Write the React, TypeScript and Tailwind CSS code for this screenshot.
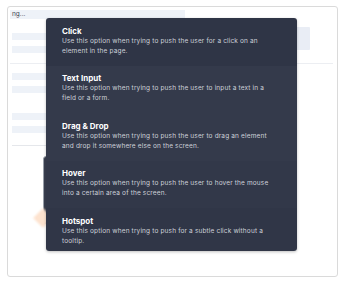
import React from 'react';

const options = [
  { title: 'Click', lines: ['Use this option when trying to push the user for a click on an', 'element in the page.'], h: 'h-[47.5px]', bg: 'bg-[#2f3546]' },
  { title: 'Text Input', lines: ['Use this option when trying to push the user to input a text in a', 'field or a form.'], h: 'h-[47.5px]', bg: 'bg-[#343a4b]' },
  { title: 'Drag & Drop', lines: ['Use this option when trying to push the user to drag an element', 'and drop it somewhere else on the screen.'], h: 'h-[47.5px]', bg: 'bg-[#343a4b]' },
  { title: 'Hover', lines: ['Use this option when trying to push the user to hover the mouse', 'into a certain area of the screen.'], h: 'h-[47.5px]', bg: 'bg-[#323849]' },
  { title: 'Hotspot', lines: ['Use this option when trying to push for a subtle click without a', 'tooltip.'], h: 'h-[43px]', bg: 'bg-[#303647]' },
];

const Bar = () => <div className="h-[7px] w-[70px] bg-[#eef2f8]" />;

const App = () => {
  return (
    <div className="relative w-[346px] h-[285px] bg-white overflow-hidden" style={{ fontFamily: 'Inter, "Noto Sans", sans-serif' }}>
      {/* Background card */}
      <div className="ml-[7px] mt-[6px] w-[331px] h-[271px] border border-[#dadada] rounded-[3px] relative overflow-hidden">
        {/* header input */}
        <div className="mt-[3px] ml-[2px] w-[175px] h-[9px] bg-[#eef2f8] flex items-center pl-[2px] text-[6.5px] leading-none text-[#3f4652]">
          ng...
        </div>

        <div className="flex justify-between pl-[4px] pr-[23px] h-[45px] border-b border-[#eceef2] mr-[4px] ml-[2px]">
          <div className="flex flex-col gap-[6px] mt-[14px] -ml-[2px]">
            <Bar />
            <Bar />
          </div>
          <div className="mt-[8px] w-[17px] h-[23px] bg-[#e9edf5] rounded-[1px]" />
        </div>

        <div className="flex flex-col pl-[4px] pt-[9px]">
          <div className="flex flex-col gap-[6px]">
            <Bar />
            <Bar />
          </div>
          <div className="flex flex-col gap-[6px] mt-[20px]">
            <Bar />
            <Bar />
          </div>
          <div className="mt-[12px] w-[80px] border-b border-[#e5e7eb]" />
          <div className="relative mt-[10px] h-[70px]">
            <div className="absolute left-[31px] top-0 w-[20px] h-[68px] rounded-l-[3px] border border-[#9aa0aa] bg-[#3a4050]" />
            <div className="absolute left-[24px] top-[55px] w-[14px] h-[14px] rotate-45 bg-[#fde3cf] blur-[1px]" />
          </div>
        </div>
      </div>

      {/* Dropdown menu */}
      <div className="absolute left-[46px] top-[18px] w-[251px] rounded-[3px] overflow-hidden shadow-[0_1px_3px_rgba(0,0,0,0.25)] flex flex-col">
        {options.map((o) => (
          <div key={o.title} className={`${o.h} ${o.bg} pl-[16px] pr-[10px] pt-[7.5px]`}>
            <div className="text-[8px] leading-[10px] font-bold text-white">{o.title}</div>
            {o.lines.map((l) => (
              <div key={l} className="text-[6.5px] leading-[10px] tracking-[0.15px] text-[#cdd1d9] whitespace-nowrap">{l}</div>
            ))}
          </div>
        ))}
      </div>
    </div>
  );
};

export default App;
